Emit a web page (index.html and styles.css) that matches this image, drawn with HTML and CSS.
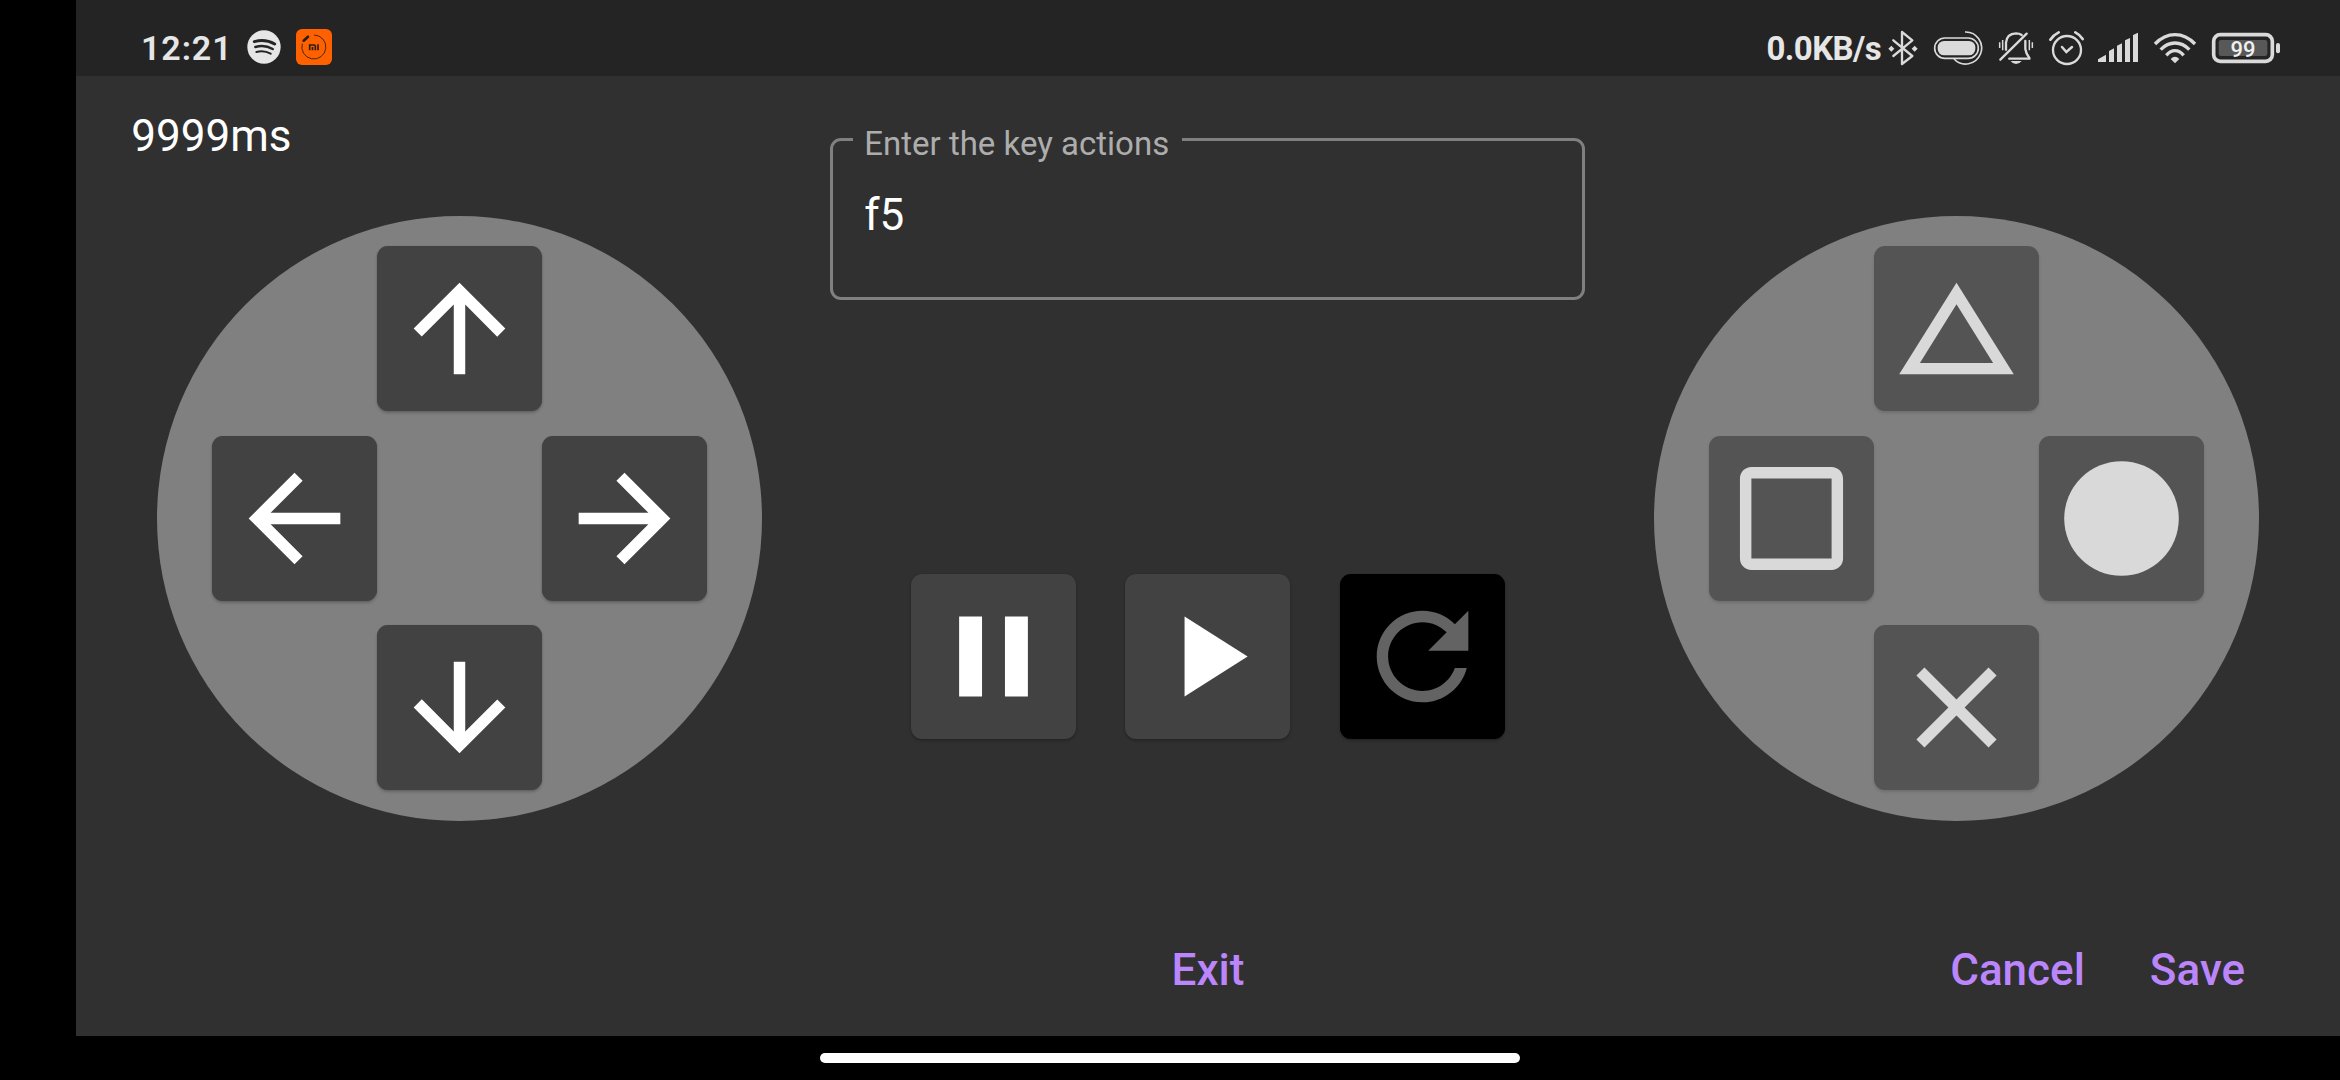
FILE: index.html
```html
<!DOCTYPE html>
<html lang="en">
<head>
<meta charset="utf-8">
<title>Gamepad</title>
<link rel="stylesheet" href="styles.css">
</head>
<body>
<div class="screen">
  <header class="status">
    <span class="clock">12:21</span>
    <svg class="spotify" viewBox="558 87 108 108" width="36" height="36">
      <circle cx="612" cy="141" r="50" fill="#e6e6e6"/>
      <g fill="none" stroke="#242424" stroke-linecap="round">
        <path d="M583 125Q616 116 644 132" stroke-width="9"/>
        <path d="M586 141Q614 133 638 147" stroke-width="7.500"/>
        <path d="M589 156Q612 150 632 161" stroke-width="6"/>
      </g>
    </svg>
    <svg class="mi" viewBox="708 87 108 108" width="36" height="36">
      <rect x="708" y="87" width="108" height="108" rx="18" fill="#ff6100"/>
      <path d="M762 105A36 36 0 1 1 727 131" fill="none" stroke="#2b1d14" stroke-width="2.600"/>
      <path d="M731 122L744 110" stroke="#2b1d14" stroke-width="8" stroke-linecap="round"/>
      <path d="M749 151V135H762Q766 135 766 139V151M757.500 141V151M774 133V151" fill="none" stroke="#2b1d14" stroke-width="5"/>
    </svg>
    <div class="tray">
      <span class="speed">0.0KB/s</span>
      <svg viewBox="411 57 96 111" width="32" height="37">
        <path d="M430 91L487 138L456 162V66L487 91L430 138" fill="none" stroke="#dadada" stroke-width="7" stroke-linejoin="round" stroke-linecap="round"/>
        <path d="M424 107l9 9-9 9-9-9zM494 107l9 9-9 9-9-9z" fill="#dadada"/>
      </svg>
      <svg viewBox="549 57 153 111" width="51" height="37">
        <rect x="554" y="84" width="131" height="61" rx="30.500" fill="none" stroke="#dadada" stroke-width="5"/>
        <rect x="563" y="93" width="113" height="43" rx="19" fill="#dadada"/>
        <path d="M645 66A48 48 0 1 1 612 147" fill="none" stroke="#dadada" stroke-width="5"/>
      </svg>
      <svg viewBox="744 57 108 111" width="36" height="37">
        <g fill="none" stroke="#dadada" stroke-width="7" stroke-linecap="round">
          <path d="M751 149L830 71"/>
          <path d="M768 119V98Q770 71 798 70Q808 70 815 75"/>
          <path d="M826 93V117Q828 131 838 144" />
          <path d="M778 146H838"/>
        </g>
        <path d="M782 153H815Q808 162 798 162Q788 162 782 153Z" fill="#dadada"/>
        <path d="M749 97V114M758 90V121M838 90V121M847 97V114" stroke="#dadada" stroke-width="4.500"/>
      </svg>
      <svg viewBox="24 57 108 111" width="36" height="37">
        <g fill="none" stroke="#dadada" stroke-width="7" stroke-linecap="round">
          <circle cx="81" cy="120" r="42"/>
          <path d="M66 111L79 126L96 111" stroke-width="7.500"/>
          <path d="M31 89Q40 75 56 67M106 67Q120 74 128 87" stroke-width="8"/>
        </g>
      </svg>
      <svg viewBox="174 57 123 111" width="41" height="37">
        <path d="M174 156V148L198 134V156ZM207 156V123L222 115V156ZM231 156V107L246 100V156ZM255 156V91L270 84V156ZM279 156V75L294 68V156Z" fill="#dadada"/>
      </svg>
      <svg viewBox="339 57 132 111" width="44" height="37">
        <g fill="none" stroke="#dadada" stroke-width="10">
          <path d="M345 102Q372 74 405 74Q438 74 465 102"/>
          <path d="M362 119Q381 99 405 99Q429 99 448 119"/>
          <path d="M379 136Q391 122 405 122Q419 122 431 136"/>
        </g>
        <path d="M392 147Q405 134 418 147L405 160Z" fill="#dadada"/>
      </svg>
      <svg class="battery" viewBox="513 57 210 111" width="70" height="37">
        <rect x="521" y="74" width="176" height="80" rx="20" fill="none" stroke="#dadada" stroke-width="11"/>
        <rect x="536" y="90" width="146" height="48" rx="7" fill="#585858"/>
        <rect x="708" y="99" width="12" height="31" rx="6" fill="#dadada"/>
        <text x="609" y="140" text-anchor="middle">99</text>
      </svg>
    </div>
  </header>

  <main class="app">
    <div class="stage">
      <section class="side">
        <span class="time">9999ms</span>
        <div class="pad">
          <button class="key up"><svg viewBox="-2.400 -2.400 28.800 28.800"><path d="M4 12l1.410 1.410L11 7.830V20h2V7.830l5.580 5.590L20 12l-8-8-8 8z"/></svg></button>
          <button class="key left"><svg viewBox="-2.400 -2.400 28.800 28.800"><path d="M20 11H7.830l5.590-5.590L12 4l-8 8 8 8 1.410-1.410L7.830 13H20v-2z"/></svg></button>
          <button class="key right"><svg viewBox="-2.400 -2.400 28.800 28.800"><path d="M12 4l-1.410 1.410L16.170 11H4v2h12.170l-5.580 5.590L12 20l8-8z"/></svg></button>
          <button class="key down"><svg viewBox="-2.400 -2.400 28.800 28.800"><path d="M20 12l-1.410-1.410L13 16.170V4h-2v12.170l-5.580-5.590L4 12l8 8 8-8z"/></svg></button>
        </div>
      </section>

      <section class="center">
        <fieldset class="field">
          <legend>Enter the key actions</legend>
          <div class="value">f5</div>
        </fieldset>
        <div class="player">
          <button class="key"><svg viewBox="-2.400 -2.400 28.800 28.800"><path d="M6 19h4V5H6v14zm8-14v14h4V5h-4z"/></svg></button>
          <button class="key"><svg viewBox="-2.400 -2.400 28.800 28.800"><path d="M8 5v14l11-7z"/></svg></button>
          <button class="key repeat"><svg viewBox="-2.400 -2.400 28.800 28.800"><path d="M17.650 6.350C16.200 4.900 14.210 4 12 4c-4.420 0-7.990 3.580-7.990 8s3.570 8 7.990 8c3.730 0 6.840-2.550 7.730-6h-2.080c-.820 2.330-3.040 4-5.650 4-3.310 0-6-2.690-6-6s2.690-6 6-6c1.660 0 3.140.690 4.220 1.780L13 11h7V4l-2.350 2.350z"/></svg></button>
        </div>
      </section>

      <section class="side">
        <div class="pad muted">
          <button class="key up"><svg viewBox="-2.400 -2.400 28.800 28.800"><path d="M12 7.770L18.390 18H5.610L12 7.770M12 4L2 20h20L12 4z"/></svg></button>
          <button class="key left"><svg viewBox="-2.400 -2.400 28.800 28.800"><path d="M19 5v14H5V5h14m0-2H5c-1.100 0-2 .900-2 2v14c0 1.100.900 2 2 2h14c1.100 0 2-.900 2-2V5c0-1.100-.900-2-2-2z"/></svg></button>
          <button class="key right"><svg viewBox="-2.400 -2.400 28.800 28.800"><circle cx="12" cy="12" r="10"/></svg></button>
          <button class="key down"><svg viewBox="-2.400 -2.400 28.800 28.800"><path d="M19 6.410L17.590 5 12 10.590 6.410 5 5 6.410 10.590 12 5 17.590 6.410 19 12 13.410 17.590 19 19 17.590 13.410 12z"/></svg></button>
        </div>
      </section>
    </div>

    <footer class="actions">
      <button class="link exit">Exit</button>
      <div class="confirm">
        <button class="link">Cancel</button>
        <button class="link">Save</button>
      </div>
    </footer>
  </main>

  <nav class="gesture"><div class="handle"></div></nav>
</div>
</body>
</html>
```
FILE: styles.css
```css
* { box-sizing: border-box; }

body {
  margin: 0;
  background: #000;
  font-family: Roboto, sans-serif;
  color: #fff;
}

button {
  margin: 0;
  padding: 0;
  border: 0;
  background: none;
  font: inherit;
}

.screen {
  display: grid;
  grid-template-rows: 76px 960px 44px;
  width: 2340px;
  height: 1080px;
  padding-left: 76px;
  overflow: hidden;
}

/* Status bar */
.status {
  display: flex;
  align-items: flex-start;
  padding: 29px 59px 0 65px;
  background: #242424;
  color: #e6e6e6;
  line-height: 37px;
}

.status svg { display: block; flex: none; }

.clock {
  width: 105px;
  padding-top: 1px;
  font-size: 34px;
  font-weight: 600;
  letter-spacing: .9px;
}

.mi { margin-left: 14px; }

.tray {
  display: flex;
  gap: 14px;
  margin-left: auto;
}

.speed {
  margin-right: -8px;
  padding-top: 1px;
  font-size: 33px;
  font-weight: 700;
  letter-spacing: -.6px;
}

.battery text {
  fill: #f0f0f0;
  font-size: 66px;
  font-weight: 500;
}

/* Application area */
.app {
  display: grid;
  grid-template-rows: 1fr 130px;
  background: #303030;
}

.stage {
  display: grid;
  grid-template-columns: 605px 755.500px 605px;
  justify-content: center;
  column-gap: 68px;
}

.side {
  display: flex;
  flex-direction: column;
  justify-content: flex-end;
  padding-bottom: 85.500px;
}

.time {
  margin: 0 0 53.500px -26px;
  font-size: 44px;
  line-height: 52px;
}

.pad {
  display: grid;
  grid-template: repeat(3, 165px) / repeat(3, 165px);
  grid-template-areas: ". up ." "left . right" ". down .";
  row-gap: 24.750px;
  place-content: center;
  height: 605px;
  border-radius: 50%;
  background: #808080;
}

.up { grid-area: up; }
.left { grid-area: left; }
.right { grid-area: right; }
.down { grid-area: down; }

.key {
  width: 165px;
  height: 165px;
  border-radius: 11px;
  background: #424242;
  box-shadow: 0 2px 3px rgba(0, 0, 0, .22), 0 0 1px rgba(0, 0, 0, .25);
}

.key svg {
  display: block;
  width: 165px;
  height: 165px;
  fill: #fff;
}

.muted .key { background: #545454; box-shadow: 0 2px 3px rgba(0, 0, 0, .14); }
.muted svg { fill: #d9d9d9; }
.repeat { background: #000; }
.repeat svg { fill: #636363; }

.field {
  width: 755px;
  height: 185px;
  margin: 39px 0 273.500px;
  padding: 0 30px;
  border: 3px solid #808080;
  border-radius: 11px;
}

.field legend {
  height: 48px;
  margin-left: -10px;
  padding: 10px 13px 0 11px;
  color: #adadad;
  font-size: 33px;
  line-height: 38px;
}

.value {
  padding: 26px 0 0 1px;
  font-size: 44px;
  line-height: 52px;
}

.player {
  display: flex;
  gap: 49.500px;
  padding-left: 80.500px;
}

/* Bottom actions */
.actions {
  display: grid;
  grid-template-columns: 1fr auto 1fr;
  align-items: start;
  padding: 38px 95px 0;
}

.link {
  color: #bb86fc;
  font-size: 44px;
  font-weight: 500;
  line-height: 52px;
}

.exit { grid-column: 2; }

.confirm {
  display: flex;
  justify-content: flex-end;
  gap: 65px;
}

/* Navigation gesture strip */
.gesture {
  display: flex;
  justify-content: center;
  align-items: center;
  padding: 0 76px 0 0;
}

.handle {
  width: 700px;
  height: 10px;
  border-radius: 5px;
  background: #fff;
}
```
